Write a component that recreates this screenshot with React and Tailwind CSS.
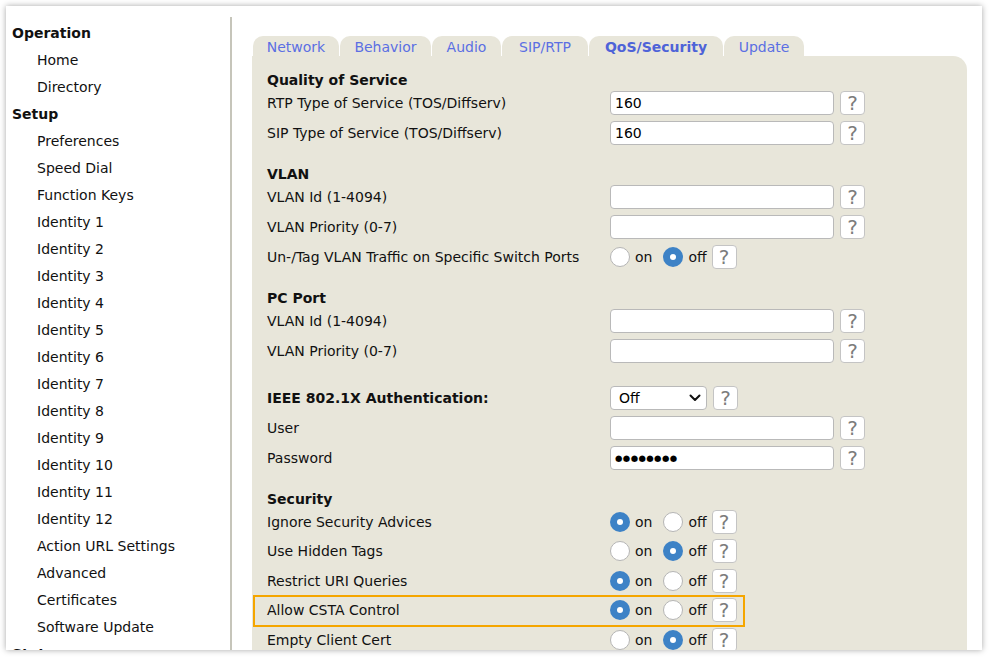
import React from 'react';

const menu = [
    { label: 'Operation', head: true },
    { label: 'Home' },
    { label: 'Directory' },
    { label: 'Setup', head: true },
    { label: 'Preferences' },
    { label: 'Speed Dial' },
    { label: 'Function Keys' },
    ...Array.from({ length: 12 }, (_, i) => ({ label: `Identity ${i + 1}` })),
    { label: 'Action URL Settings' },
    { label: 'Advanced' },
    { label: 'Certificates' },
    { label: 'Software Update' },
    { label: 'Status', head: true },
];

const tabs = [
    { label: 'Network', w: 'w-[86px]' },
    { label: 'Behavior', w: 'w-[91px]' },
    { label: 'Audio', w: 'w-[69px]' },
    { label: 'SIP/RTP', w: 'w-[86px]' },
    { label: 'QoS/Security', w: 'w-[134px]', active: true },
    { label: 'Update', w: 'w-[80px]' },
];

const Help = () => (
    <div className="w-[25px] h-[24px] bg-white border border-[#c4c4c4] rounded-[4px] flex items-center justify-center text-[20px] leading-none text-[#7c7c7c]">
        ?
    </div>
);

const TextBox = ({ value, password }) => (
    <div className="w-[224px] h-[24px] bg-white border border-[#b9b9b9] rounded-[4px] px-[4px] flex items-center text-[14px] text-black">
        {password ? <span className="text-[8.5px] leading-none tracking-[0.4px]">●●●●●●●●</span> : value}
    </div>
);

const Radio = ({ checked }) =>
    checked ? (
        <div className="w-[20px] h-[20px] rounded-full bg-[#3d82c6] flex items-center justify-center">
            <div className="w-[6px] h-[6px] rounded-full bg-white" />
        </div>
    ) : (
        <div className="w-[20px] h-[20px] rounded-full bg-white border border-[#b5b5b5]" />
    );

const OnOff = ({ on }) => (
    <div className="flex items-center">
        <Radio checked={on} />
        <span className="ml-[5px] pt-[1px]">on</span>
        <div className="ml-[11px]"><Radio checked={!on} /></div>
        <span className="ml-[5px] pt-[1px]">off</span>
        <div className="ml-[5px]"><Help /></div>
    </div>
);

const Row = ({ label, children, bold, className = '' }) => (
    <div className={`flex items-center h-[30px] ${className}`}>
        <div className={`w-[343px] shrink-0 pt-[1px] ${bold ? 'font-bold' : ''}`}>{label}</div>
        {children}
    </div>
);

const Field = ({ value, password }) => (
    <div className="flex items-center gap-[6px]">
        <TextBox value={value} password={password} />
        <Help />
    </div>
);

const Heading = ({ children, className = '' }) => (
    <div className={`h-[17px] leading-[19px] font-bold ${className}`}>{children}</div>
);

const SecRow = ({ label, on, highlight }) => (
    <div className="relative flex items-center h-[29.5px]">
        <div className="w-[343px] shrink-0 pt-[1px]">{label}</div>
        <OnOff on={on} />
        {highlight && (
            <div className="absolute left-[-14px] top-[-1px] w-[492px] h-[32px] border-2 border-[#f5a600] pointer-events-none" />
        )}
    </div>
);

export default function App() {
    return (
        <div className="w-[989px] h-[657px] bg-white pt-[6px] pl-[6px] font-['DejaVu_Sans',sans-serif] text-[14px] text-[#111]">
            <div className="w-[976px] h-[644px] bg-white shadow-[0_0_6px_rgba(0,0,0,0.35)] overflow-hidden flex">
                {/* Sidebar */}
                <div className="w-[224px] shrink-0 pl-[6px] pt-[14px]">
                    {menu.map((m) => (
                        <div
                            key={m.label}
                            className={`h-[27px] leading-[27px] whitespace-nowrap ${m.head ? 'font-bold' : 'pl-[25px]'}`}
                        >
                            {m.label}
                        </div>
                    ))}
                </div>
                <div className="w-[2px] shrink-0 mt-[11px] bg-[#c6c5ba]" />

                {/* Main */}
                <div className="flex-1 pl-[20px] pr-[15px] pt-[30px] flex flex-col">
                    <div className="flex gap-[1px] pl-[1px]">
                        {tabs.map((t) => (
                            <div
                                key={t.label}
                                className={`${t.w} h-[20px] leading-[22px] text-center rounded-t-[10px] bg-[#e8e6da] ${
                                    t.active ? 'font-bold text-[#4e63d8]' : 'text-[#5b6fe3]'
                                }`}
                            >
                                {t.label}
                            </div>
                        ))}
                    </div>
                    <div className="flex-1 bg-[#e8e6da] rounded-tr-[14px] pl-[15px] pt-[15px]">
                        <Heading>Quality of Service</Heading>
                        <Row label="RTP Type of Service (TOS/Diffserv)"><Field value="160" /></Row>
                        <Row label="SIP Type of Service (TOS/Diffserv)"><Field value="160" /></Row>

                        <Heading className="mt-[17px]">VLAN</Heading>
                        <Row label="VLAN Id (1-4094)"><Field /></Row>
                        <Row label="VLAN Priority (0-7)"><Field /></Row>
                        <Row label="Un-/Tag VLAN Traffic on Specific Switch Ports"><OnOff on={false} /></Row>

                        <Heading className="mt-[17px]">PC Port</Heading>
                        <Row label="VLAN Id (1-4094)"><Field /></Row>
                        <Row label="VLAN Priority (0-7)"><Field /></Row>

                        <Row label="IEEE 802.1X Authentication:" bold className="mt-[17px]">
                            <div className="flex items-center gap-[6px]">
                                <div className="w-[97px] h-[24px] bg-white border border-[#b9b9b9] rounded-[4px] pl-[8px] pr-[5px] flex items-center justify-between text-black">
                                    <span className="pt-[1px]">Off</span>
                                    <svg width="12" height="8" viewBox="0 0 12 8" fill="none">
                                        <path d="M1.5 1.5 L6 6 L10.5 1.5" stroke="#111" strokeWidth="2" strokeLinecap="round" strokeLinejoin="round" />
                                    </svg>
                                </div>
                                <Help />
                            </div>
                        </Row>
                        <Row label="User"><Field /></Row>
                        <Row label="Password"><Field password /></Row>

                        <Heading className="mt-[17px]">Security</Heading>
                        <SecRow label="Ignore Security Advices" on />
                        <SecRow label="Use Hidden Tags" on={false} />
                        <SecRow label="Restrict URI Queries" on />
                        <SecRow label="Allow CSTA Control" on highlight />
                        <SecRow label="Empty Client Cert" on={false} />
                    </div>
                </div>
            </div>
        </div>
    );
}
